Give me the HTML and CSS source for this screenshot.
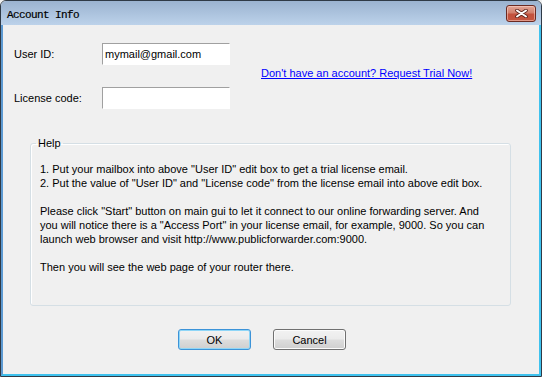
FILE: index.html
```html
<!DOCTYPE html>
<html lang="en">
<head>
    <meta charset="UTF-8">
    <title>Account Info</title>
    <link rel="stylesheet" href="styles.css">
</head>
<body>
    <div class="window">
        <div class="titlebar">
            <span class="title">Account Info</span>
            <button class="close-btn" aria-label="Close">
                <svg width="13" height="9" viewBox="0 0 13 9">
                    <path d="M2 1.5 L11 7.5 M11 1.5 L2 7.5" stroke="#5a2119" stroke-width="3.6" stroke-linecap="round"/>
                    <path d="M2 1.5 L11 7.5 M11 1.5 L2 7.5" stroke="#ffffff" stroke-width="2" stroke-linecap="round"/>
                </svg>
            </button>
        </div>

        <div class="client">
            <div class="field-row">
                <label class="field-label" for="user-id">User ID:</label>
                <input class="edit" id="user-id" type="text" value="mymail@gmail.com">
            </div>

            <div class="link-row">
                <a href="#">Don't have an account? Request Trial Now!</a>
            </div>

            <div class="field-row">
                <label class="field-label" for="license-code">License code:</label>
                <input class="edit" id="license-code" type="text" value="">
            </div>

            <fieldset class="help">
                <legend>Help</legend>
                <p>1. Put your mailbox into above "User ID" edit box to get a trial license email.<br>
                2. Put the value of "User ID" and "License code" from the license email into above edit box.</p>
                <p>Please click "Start" button on main gui to let it connect to our online forwarding server. And<br>
                you will notice there is a "Access Port" in your license email, for example, 9000. So you can<br>
                launch web browser and visit http://www.publicforwarder.com:9000.</p>
                <p>Then you will see the web page of your router there.</p>
            </fieldset>

            <div class="buttons">
                <button class="btn btn-default">OK</button>
                <button class="btn">Cancel</button>
            </div>
        </div>
    </div>
</body>
</html>
```

FILE: styles.css
```css
body {
    margin: 0;
    padding: 0;
    font-family: "Liberation Sans", Arial, sans-serif;
    font-size: 11px;
    color: #000;
    background-color: #f0f0f0;
}

.window {
    width: 542px;
    height: 377px;
    box-sizing: border-box;
    display: flex;
    flex-direction: column;
    border: 1px solid #2f3a46;
    border-radius: 6px 6px 0 0;
    overflow: hidden;
}

/* title bar */
.titlebar {
    height: 24px;
    flex: none;
    display: flex;
    align-items: flex-start;
    justify-content: space-between;
    padding: 4px 5px 0 6px;
    box-sizing: border-box;
    background: linear-gradient(#9bb3d0, #bcd2ea);
}

.title {
    margin-top: 4px;
    font-family: "Liberation Mono", "DejaVu Sans Mono", monospace;
    font-size: 11px;
    letter-spacing: -0.6px;
    line-height: 12px;
    color: #000;
    -webkit-text-stroke: 0.2px #000;
}

.close-btn {
    width: 30px;
    height: 17px;
    padding: 0;
    border: 1px solid #6b2a22;
    border-radius: 3px;
    display: flex;
    align-items: center;
    justify-content: center;
    background: linear-gradient(#e3a596 0%, #d2806d 45%, #c3513d 55%, #c5553f 100%);
    box-shadow: inset 0 0 0 1px rgba(255, 220, 210, 0.5);
}

/* client area */
.client {
    flex: 1;
    display: flex;
    flex-direction: column;
    padding-top: 18px;
    background-color: #f0f0f0;
    border-left: 2px solid #5d9ad2;
    border-right: 2px solid #3fc2ee;
    border-bottom: 2px solid #3fc2ee;
}

.field-row {
    display: flex;
    align-items: center;
    padding-left: 11px;
}

.field-label {
    width: 88px;
}

.edit {
    width: 128px;
    height: 22px;
    box-sizing: border-box;
    margin: 0;
    padding: 0 0 0 2px;
    border: 1px solid #ffffff;
    border-top-color: #a0a0a0;
    border-left-color: #a0a0a0;
    background-color: #fff;
    font-family: inherit;
    font-size: 11px;
    color: #000;
    outline: none;
}

.link-row {
    height: 22px;
    box-sizing: border-box;
    padding: 2px 0 0 258px;
    line-height: 13px;
}

.link-row a {
    color: #0000ff;
    text-decoration: underline;
}

/* Help group box */
.help {
    margin: 28px 28px 0 27px;
    padding: 0 0 31px 5px;
    border: 1px solid #d5dfe5;
    border-radius: 3px;
    box-shadow: inset 1px 1px 0 #fff;
}

.help legend {
    padding: 0 2px;
    line-height: 13px;
}

.help p {
    margin: 14px 0 0 4px;
    line-height: 14px;
    white-space: nowrap;
}

.help p:first-of-type {
    margin-top: 12px;
}

/* dialog buttons */
.buttons {
    display: flex;
    gap: 22px;
    padding-left: 175px;
    margin-top: 23px;
}

.btn {
    width: 73px;
    height: 21px;
    padding: 0;
    border: 1px solid #707070;
    border-radius: 3px;
    background: linear-gradient(#f2f2f2 0%, #ebebeb 48%, #dddddd 52%, #cfcfcf 100%);
    box-shadow: inset 0 0 0 1px #fbfbfb;
    font-family: inherit;
    font-size: 11px;
    color: #000;
}

.btn-default {
    border-color: #3c93d8;
    box-shadow: inset 0 0 0 1px #8fd6f7;
}
```
